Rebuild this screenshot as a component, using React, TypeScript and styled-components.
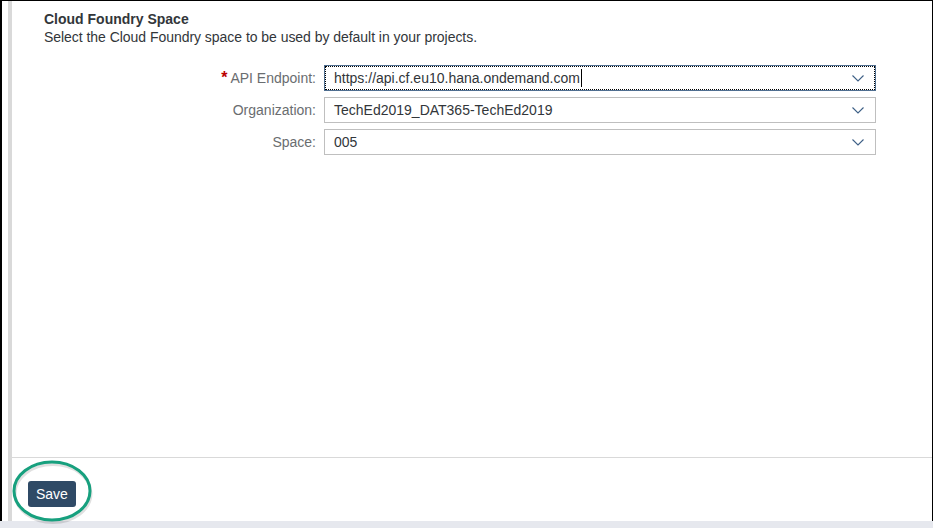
import React from "react";
import styled, { createGlobalStyle } from "styled-components";

const Global = createGlobalStyle`
  html, body { margin: 0; padding: 0; background: #ffffff; }
  body { font-family: "Liberation Sans", Arial, sans-serif; font-size: 14px; color: #32363a; }
  * { box-sizing: border-box; }
`;

const Page = styled.div`
  position: relative;
  width: 933px;
  height: 528px;
  display: flex;
  flex-direction: column;
  overflow: hidden;
`;

const Frame = styled.div`
  height: 521px;
  display: flex;
  border-top: 1px solid #000;
  border-left: 2px solid #000;
  border-right: 1px solid #000;
  padding-left: 6px;
  background: #fff;
`;

const SideBar = styled.div`
  width: 4px;
  background: #d9d9d9;
  flex: none;
`;

const Main = styled.div`
  flex: 1;
  display: flex;
  flex-direction: column;
`;

const Content = styled.div`
  flex: 1;
  padding: 9px 0 0 32px;
`;

const Title = styled.div`
  font-weight: bold;
  font-size: 14px;
  line-height: 18px;
  color: #32363a;
`;

const Description = styled.div`
  font-size: 14px;
  line-height: 18px;
  color: #32363a;
  letter-spacing: -0.04px;
`;

const Form = styled.div`
  margin-top: 19px;
  display: grid;
  grid-template-columns: 272px 552px;
  column-gap: 8px;
  row-gap: 6px;
  align-items: center;
`;

const Label = styled.div`
  text-align: right;
  color: #6a6d70;
  font-size: 14px;
  line-height: 18px;
`;

const Required = styled.span`
  color: #bb0000;
  font-weight: bold;
  font-size: 16px;
  line-height: 14px;
  margin-right: 3px;
`;

const Select = styled.div<{ $focused?: boolean }>`
  height: 26px;
  display: flex;
  align-items: center;
  justify-content: space-between;
  padding: 0 11px 0 9px;
  border: 1px solid ${(p) => (p.$focused ? "#4f6e90" : "#bfbfbf")};
  outline: ${(p) => (p.$focused ? "1px dotted #000" : "none")};
  outline-offset: -2px;
  background: #fff;
  color: #32363a;
  font-size: 14px;
`;

const Value = styled.span`
  display: flex;
  align-items: center;
  white-space: nowrap;
`;

const Caret = styled.span`
  display: inline-block;
  width: 1px;
  height: 18px;
  background: #000;
  margin-left: 1px;
`;

const Footer = styled.div`
  height: 64px;
  border-top: 1px solid #d9d9d9;
  padding: 23px 0 0 16px;
`;

const SaveButton = styled.button`
  height: 26px;
  padding: 0 8px;
  border: none;
  border-radius: 3px;
  background: #2f4a66;
  color: #ffffff;
  font-family: "Liberation Sans", Arial, sans-serif;
  font-size: 14px;
  cursor: pointer;
`;

const BottomStrip = styled.div`
  height: 7px;
  background: #e6e8ee;
`;

const Annotation = styled.svg`
  position: absolute;
  left: 8px;
  top: 455px;
  pointer-events: none;
`;

const Chevron = () => (
  <svg width="12" height="7" viewBox="0 0 12 7">
    <polyline points="0.5,0.5 6,6 11.5,0.5" fill="none" stroke="#3d5f86" strokeWidth="1.1" />
  </svg>
);

export default function App() {
  return (
    <Page>
      <Global />
      <Frame>
        <SideBar />
        <Main>
          <Content>
            <Title>Cloud Foundry Space</Title>
            <Description>Select the Cloud Foundry space to be used by default in your projects.</Description>
            <Form>
              <Label>
                <Required>*</Required>API Endpoint:
              </Label>
              <Select $focused>
                <Value>
                  https://api.cf.eu10.hana.ondemand.com
                  <Caret />
                </Value>
                <Chevron />
              </Select>
              <Label>Organization:</Label>
              <Select>
                <Value>TechEd2019_DAT365-TechEd2019</Value>
                <Chevron />
              </Select>
              <Label>Space:</Label>
              <Select>
                <Value>005</Value>
                <Chevron />
              </Select>
            </Form>
          </Content>
          <Footer>
            <SaveButton>Save</SaveButton>
          </Footer>
        </Main>
      </Frame>
      <BottomStrip />
      <Annotation width="90" height="72" viewBox="0 0 90 72">
        <ellipse cx="44" cy="37" rx="38" ry="29" fill="none" stroke="rgba(0,0,0,0.12)" strokeWidth="3" transform="translate(1,1.5)" />
        <ellipse cx="44" cy="36" rx="38" ry="29" fill="none" stroke="#17a07e" strokeWidth="3" />
      </Annotation>
    </Page>
  );
}
